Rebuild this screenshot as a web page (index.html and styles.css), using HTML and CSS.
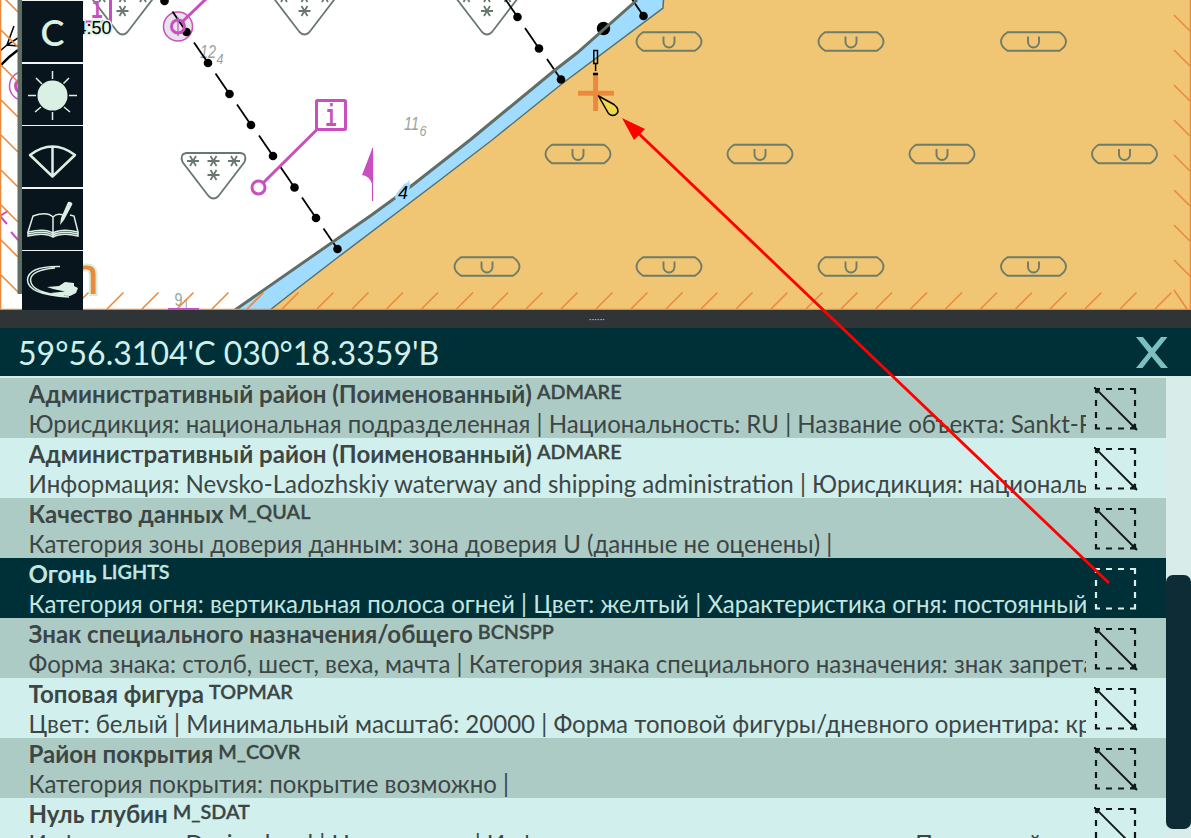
FILE: index.html
```html
<!DOCTYPE html>
<html lang="ru">
<head>
<meta charset="utf-8">
<title>Карта</title>
<link rel="stylesheet" href="styles.css">
</head>
<body>
<main class="app">
  <section class="chart">
    <svg class="chart-canvas" width="1191" height="310" viewBox="0 0 1191 310">
      <defs>
        <g id="quality"><path d="M-26-9.3H26Q32.500-5 32.500 0T26 9.300H-26Q-32.500 5-32.500 0T-26-9.300Z"/><path d="M-5.500-5V0.500A5.500 5.500 0 0 0 5.500 0.500V-5"/></g>
        <g id="star"><path d="M-6 0H6M-3-5L3 5M3-5L-3 5"/></g>
        <g id="zoc"><path d="M-27-21H27Q34-20 31-12L5 22Q0 27-5 22L-31-12Q-34-20-27-21Z"/><use href="#star" x="-20.500" y="-13"/><use href="#star" y="-13"/><use href="#star" x="20.500" y="-13"/><use href="#star" y="1"/></g>
        <g id="node"><path d="M-14-20.500L0 0"/><circle r="4.300" fill="#000" stroke="none"/></g>
      </defs>
      <rect width="1191" height="310" fill="#fff"/>
      <path fill="#9fdcff" d="M235 310L373 214L410 187L470 140L555 70L577 53L637 0H663.500L663 8L563 83L440 180L337 258L298 288L270 310Z"/>
      <path fill="#f0c674" d="M270 310L298 288L337 258L440 180L492 140L563 83L663 8L663.500 0H1191V310Z"/>
      <path fill="none" stroke="#5a6e66" stroke-width="1.500" d="M270 310L298 288L337 258L440 180L492 140L563 83L663 8L663.500 0"/>
      <g fill="none" stroke="#6f7c68" stroke-width="1.900">
        <use href="#quality" x="669" y="41.500"/><use href="#quality" x="851" y="41.500"/><use href="#quality" x="1033.500" y="41.500"/>
        <use href="#quality" x="578" y="154"/><use href="#quality" x="760" y="154"/><use href="#quality" x="942" y="154"/><use href="#quality" x="1124.500" y="154"/>
        <use href="#quality" x="487" y="266.500"/><use href="#quality" x="669" y="266.500"/><use href="#quality" x="851" y="266.500"/><use href="#quality" x="1033.500" y="266.500"/>
      </g>
      <g fill="none" stroke="#68786e" stroke-width="1.800">
        <use href="#zoc" x="213.500" y="174"/><use href="#zoc" x="122.500" y="10"/><use href="#zoc" x="304.500" y="10"/><use href="#zoc" x="487" y="10"/>
      </g>
      <g class="sounding">
        <text x="200" y="58" class="deep" textLength="16" lengthAdjust="spacingAndGlyphs">12</text><text x="216.500" y="64" class="tenth" textLength="7" lengthAdjust="spacingAndGlyphs">4</text>
        <text x="404" y="130" class="deep" textLength="15" lengthAdjust="spacingAndGlyphs">11</text><text x="419.500" y="136" class="tenth" textLength="7" lengthAdjust="spacingAndGlyphs">6</text>
        <text x="174.500" y="306" class="deep upright" textLength="8" lengthAdjust="spacingAndGlyphs">9</text><text x="183" y="309" class="tenth upright" textLength="6" lengthAdjust="spacingAndGlyphs">1</text>
      </g>
      <circle cx="178" cy="26.500" r="14.500" fill="#e6e4ea" stroke="#c94fc0" stroke-width="1.500"/>
      <g stroke="#000" stroke-width="1.800">
        <use href="#node" x="164.500" y="1"/><use href="#node" x="186.500" y="32"/><use href="#node" x="208" y="63"/><use href="#node" x="229.500" y="94"/><use href="#node" x="251" y="125"/><use href="#node" x="273" y="156"/><use href="#node" x="294.500" y="187.500"/><use href="#node" x="316" y="218"/><use href="#node" x="337.500" y="249"/>
        <use href="#node" x="517.500" y="17"/><use href="#node" x="539" y="48.500"/><use href="#node" x="561" y="79.500"/><use href="#node" x="643.500" y="16"/>
      </g>
      <circle cx="603.500" cy="28.500" r="6.700"/>
      <path fill="none" stroke="#5f6e66" stroke-width="3" d="M235 310L373 214L410 187L470 140L555 70L577 53L637 0"/>
      <text x="398" y="199" class="contour">4</text>
      <g fill="none" stroke="#c94fc0" stroke-width="3">
        <rect x="316.500" y="100.500" width="29" height="29" rx="1"/>
        <path d="M316.500 130L263 183M182 22L207-2"/><circle cx="258.500" cy="187.500" r="6.500"/><circle cx="178" cy="26.500" r="6.500"/>
        <path stroke-width="1.200" d="M372.500 148V201M178 17V36"/>
        <path stroke="none" fill="#c94fc0" d="M372.500 148L362 175Q370 176 372.500 185Z"/>
        <path d="M82-8H110.500V22H82"/><circle cx="24" cy="86" r="14.500" stroke-width="1.500"/><circle cx="22" cy="86" r="6.500"/>
        <path stroke-width="2" d="M0 216L8 211M0 216L7 224M11 232L19 241"/>
      </g>
      <text class="info" transform="translate(331 126) scale(.62 1)">i</text><text class="info" transform="translate(97 18) scale(.62 1)">i</text>
      <g fill="none" stroke="#000"><path stroke-width="1.500" d="M14 26L7 45L18 38M7 45L0 51M7 45L18 46"/><path stroke-width="2.500" d="M0 66Q8 57 18 50M68 0L83 3"/></g>
      <text x="76.500" y="33.500" class="clock">4:50</text>
      <text x="69.500" y="294" class="bridge">n</text>
      <path fill="none" stroke="#eb8a3c" stroke-width="1.600" d="M.5 0V310M0 309.500H1191M1190.500 0V310M1-5l17 17M1 30l17 17M1 65l17 17M1 100l17 17M1 135l17 17M1 170l17 17M1 205l17 17M1 240l17 17M1 275l17 17M1174 15l16 16M1174 50l16 16M1174 85l16 16M1174 120l16 16M1174 155l16 16M1174 190l16 16M1174 225l16 16M1174 260l16 16M1174 290l13 19M72 309l16.500-16.500M107 309l16.500-16.500M142 309l16.500-16.500M177 309l16.500-16.500M212 309l16.500-16.500M247 309l16.500-16.500M282 309l16.500-16.500M317 309l16.500-16.500M352 309l16.500-16.500M386.500 309l16.500-16.500M421.500 309l16.500-16.500M456.500 309l16.500-16.500M491.500 309l16.500-16.500M526 309l16.500-16.500M561 309l16.500-16.500M596 309l16.500-16.500M631 309l16.500-16.500M666 309l16.500-16.500M701 309l16.500-16.500M736 309l16.500-16.500M771 309l16.500-16.500M806 309l16.500-16.500M841 309l16.500-16.500M875.500 309l16.500-16.500M910.500 309l16.500-16.500M945.500 309l16.500-16.500M980.500 309l16.500-16.500M1015.500 309l16.500-16.500M1050 309l16.500-16.500M1085 309l16.500-16.500M1120 309l16.500-16.500M1155 309l16.500-16.500"/>
      <path stroke="#c94fc0" stroke-width="2" d="M168 309H199"/>
      <path fill="#5f6e62" d="M17.500 0H23V294H17.500Z"/>
      <path stroke="#eb8a3c" stroke-width="5" d="M595.600 75V111M578 93.200H614"/>
      <path fill="none" stroke="#000" stroke-width="1.500" d="M593.800 50.500H597.500V63.500H593.800ZM595.600 64V71"/><path stroke="#000" stroke-width="2.500" d="M593 74H598"/>
      <path fill="#eed84c" stroke="#000" stroke-width="1.500" stroke-linejoin="round" d="M598.500 96L614 104.500Q620 109.500 617 113.500Q613 117.500 608.500 113.500Z"/>
    </svg>
    <nav class="tools">
      <button class="tool tool-letter">С</button>
      <button class="tool"><svg viewBox="0 0 61 61"><circle cx="30.500" cy="31.500" r="14.300" fill="#daf0e4"/><path d="M30.500 7V15M30.500 48V56M6 31.500H14M47 31.500H55M14 14L20 20M47 14L41.500 19.500M13 48L19 43M48 48L42 43"/></svg></button>
      <button class="tool"><svg viewBox="0 0 61 61"><path class="bold" d="M8 29Q30.500 12 53 29L30.500 50.500ZM30.500 20V50"/></svg></button>
      <button class="tool"><svg viewBox="0 0 61 61"><path d="M31 28Q25 22 11 27L6 43Q23 39 31 44Q40 39 56 43L52 27L48 26M31 28Q35 24 41 26M31 28V47M6 43V47Q23 43 31 48Q40 43 56 47V43M6 45Q23 41 31 46Q40 41 56 45"/><path fill="#daf0e4" stroke="none" d="M46 13Q49 12 50.500 15L42 31L38 36L39 29Z"/></svg></button>
      <button class="tool"><svg viewBox="0 0 61 61"><path d="M38 15.500Q6 15 5.500 29Q6 44 47 46M33 17Q9 19 8.500 29Q9 42 42 44.500"/><path fill="#daf0e4" stroke="none" d="M25 36L37 35L43 31L52 32V35L56 37L54 42L48 45Q36 45 28 42L43 40.500L31 38Z"/></svg></button>
    </nav>
  </section>
  <div class="splitter">······</div>
  <header class="position"><span class="coords">59°56.3104'С 030°18.3359'В</span>
    <button class="close"><svg width="32" height="32" viewBox="0 0 32 32"><path d="M0 0H7L16 11L25 0H31.500L19 15.500L32 31H25L15.500 19.500L6.500 31H0L12.500 15.500Z"/></svg></button>
  </header>
  <section class="results">
    <div class="list">
      <article class="row"><div class="info-text"><h2>Административный район (Поименованный)<small>ADMARE</small></h2><p>Юрисдикция: национальная подразделенная | Национальность: RU | Название объекта: Sankt-Petersburg</p></div><svg class="area"><use href="#area"/></svg></article>
      <article class="row"><div class="info-text"><h2>Административный район (Поименованный)<small>ADMARE</small></h2><p>Информация: Nevsko-Ladozhskiy waterway and shipping administration | Юрисдикция: национальная</p></div><svg class="area"><use href="#area"/></svg></article>
      <article class="row"><div class="info-text"><h2>Качество данных<small>M_QUAL</small></h2><p>Категория зоны доверия данным: зона доверия U (данные не оценены) |</p></div><svg class="area"><use href="#area"/></svg></article>
      <article class="row selected"><div class="info-text"><h2>Огонь<small>LIGHTS</small></h2><p>Категория огня: вертикальная полоса огней | Цвет: желтый | Характеристика огня: постоянный</p></div><svg class="area"><use href="#frame"/></svg></article>
      <article class="row"><div class="info-text"><h2>Знак специального назначения/общего<small>BCNSPP</small></h2><p>Форма знака: столб, шест, веха, мачта | Категория знака специального назначения: знак запретa</p></div><svg class="area"><use href="#area"/></svg></article>
      <article class="row"><div class="info-text"><h2>Топовая фигура<small>TOPMAR</small></h2><p>Цвет: белый | Минимальный масштаб: 20000 | Форма топовой фигуры/дневного ориентира: круг</p></div><svg class="area"><use href="#area"/></svg></article>
      <article class="row"><div class="info-text"><h2>Район покрытия<small>M_COVR</small></h2><p>Категория покрытия: покрытие возможно |</p></div><svg class="area"><use href="#area"/></svg></article>
      <article class="row"><div class="info-text"><h2>Нуль глубин<small>M_SDAT</small></h2><p>Информация: Design level | Не известно | Информация на национальном языке: Проектный</p></div><svg class="area"><use href="#area"/></svg></article>
    </div>
    <div class="scroll"><div class="thumb"></div></div>
  </section>
  <svg class="pointer" width="1191" height="838" viewBox="0 0 1191 838">
    <defs>
      <g id="frame" fill="none" stroke="currentColor" stroke-width="2.200"><path d="M2 6V2H6M12 2H18M24 2H30M36 2H41V7M41 13V19M41 25V31M41 37V41.500H36M30 41.500H24M18 41.500H12M6 41.500H2V37M2 31V25M2 19V13"/></g>
      <g id="area"><use href="#frame"/><path d="M0 0L43 43" stroke="currentColor" stroke-width="1.900"/><path fill="currentColor" d="M0 0L6 3L3 7ZM43 43L36 41L41 36Z"/></g>
    </defs>
    <path stroke="#f00" stroke-width="2.800" d="M635 130L1109 583"/><path fill="#f00" d="M622 118L645 129L634 140Z"/>
  </svg>
</main>
</body>
</html>
```
FILE: styles.css
```css
* { box-sizing: border-box; }
body { margin: 0; overflow: hidden; font-family: Lato, "Noto Sans", sans-serif; }
.app { position: relative; width: 1191px; height: 838px; overflow: hidden; display: flex; flex-direction: column; background: #d8edea; }
.chart { position: relative; height: 310px; flex: none; }
.chart-canvas { display: block; }
.sounding { fill: #98a49c; font-family: "Liberation Sans", Arial, sans-serif; }
.deep { font-size: 19px; font-style: italic; }
.tenth { font-size: 14px; font-style: italic; }
.upright { font-style: normal; }
.contour { font: italic 18px "Liberation Sans", sans-serif; paint-order: stroke; stroke: #9fdcff; stroke-width: 5px; }
.info { font: bold 31px "Liberation Mono", monospace; fill: #c94fc0; text-anchor: middle; }
.clock { font: 18px "Liberation Sans", sans-serif; paint-order: stroke; stroke: #daf0e0; stroke-width: 3px; }
.bridge { font: 53px "Liberation Sans", sans-serif; fill: #eb8a3c; paint-order: stroke; stroke: #d5eed8; stroke-width: 4px; }
.tools { position: absolute; left: 22px; top: 0; width: 61px; height: 310px; padding-top: 1px; display: flex; flex-direction: column; gap: 1.500px; overflow: hidden; background: #f2f5f4; }
.tool { flex: none; width: 61px; height: 61px; padding: 0; border: 0; background: #09151c; color: #daf0e4; }
.tool svg { display: block; width: 61px; height: 61px; fill: none; stroke: #daf0e4; stroke-width: 1.500; }
.tool .bold { stroke-width: 2.500; stroke-linejoin: round; }
.tool-letter { font: 600 36px Lato, sans-serif; }
.splitter { height: 18px; flex: none; padding-left: 3px; background: #2f3437; color: #bbb; text-align: center; font-size: 9px; letter-spacing: .3px; line-height: 17px; }
.position { height: 48px; flex: none; padding: 0 23px 0 18px; display: flex; align-items: center; justify-content: space-between; background: #003037; color: #d1efec; }
.coords { font-size: 32px; letter-spacing: .03px; }
.close { padding: 1px 0 0; border: 0; background: none; display: flex; fill: #7bbfc0; }
.results { flex: 1; min-height: 0; padding-top: 2px; display: flex; }
.list { width: 1166px; height: 460px; overflow: hidden; }
.row { height: 60px; padding: 0 26px 0 28.500px; display: flex; justify-content: space-between; background: #d1efec; color: #3c4645; }
.row:nth-child(odd) { background: #adcbc5; }
.row.selected { background: #003037; color: #c4e5e0; }
.info-text { width: 1057px; overflow: hidden; white-space: nowrap; }
h2 { margin: 0; height: 30px; font-size: 24.050px; font-weight: 700; line-height: 32px; }
small { margin-left: 5px; font-size: 19.800px; font-weight: 600; -webkit-text-stroke: .3px; position: relative; top: -4px; }
p { margin: 0; height: 30px; font-size: 24.050px; line-height: 31px; }
.area { flex: none; margin-top: 9px; width: 46px; height: 46px; color: #101818; }
.selected .area { color: #d8eeea; }
.scroll { flex: 1; padding-top: 197px; }
.thumb { height: 254px; border-radius: 7px; background: #0d2c36; }
.pointer { position: absolute; inset: 0; pointer-events: none; }
```
